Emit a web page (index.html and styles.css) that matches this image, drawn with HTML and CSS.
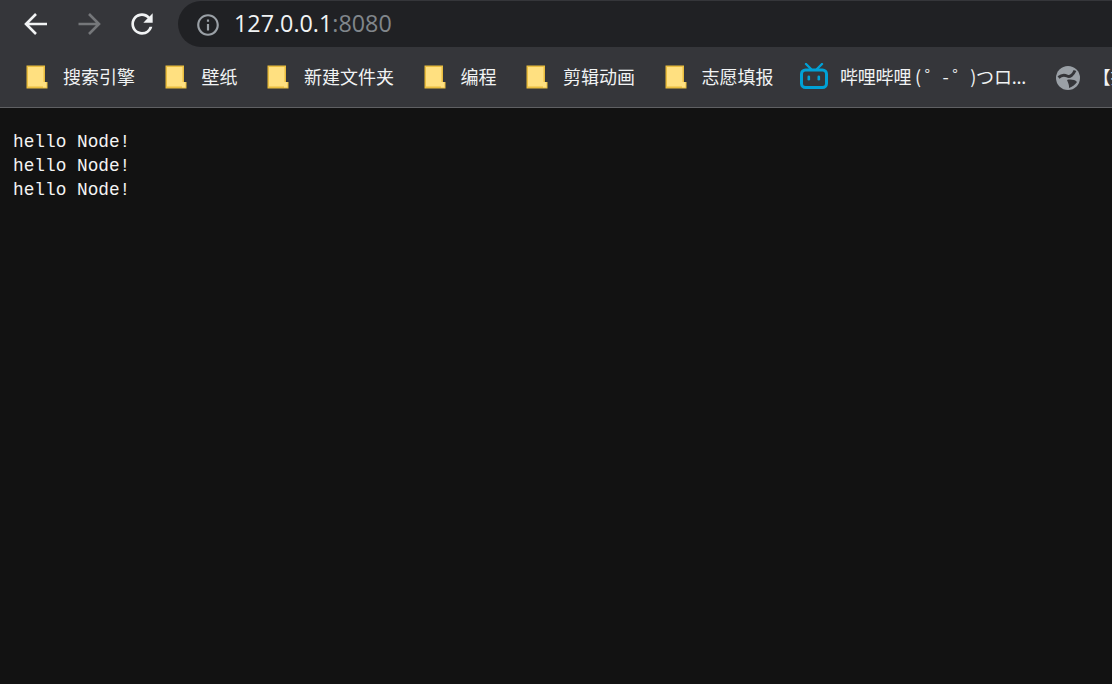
FILE: index.html
```html
<!DOCTYPE html>
<html>
<head>
  <title>127.0.0.1:8080</title>
  <meta charset="UTF-8">
  <link rel="stylesheet" href="styles.css">
</head>
<body>
  <svg class="defs" width="0" height="0">
    <symbol id="folder" viewBox="0 0 22 24">
      <path d="M0.5 0.5h18.5v16.5h2.5v6.5h-21z" fill="#e9bd3f"/>
      <rect x="2" y="2" width="15.5" height="19.5" fill="#ffe080"/>
      <rect x="17" y="17" width="3.5" height="5.5" fill="#ffe080"/>
    </symbol>
  </svg>

  <div class="toolbar">
    <button class="nav-button">
      <svg viewBox="0 0 32 32" width="32" height="32"><path d="M27 16H6.5M16 6l-10 10 10 10" fill="none" stroke="#f1f3f4" stroke-width="2.6"/></svg>
    </button>
    <button class="nav-button">
      <svg viewBox="0 0 32 32" width="32" height="32"><path d="M5.5 16H25.5M16 6l10 10-10 10" fill="none" stroke="#75777a" stroke-width="2.6"/></svg>
    </button>
    <button class="nav-button">
      <svg viewBox="0 0 24 24" width="32" height="32"><path fill="#f1f3f4" d="M17.65 6.35A7.958 7.958 0 0 0 12 4c-4.42 0-7.99 3.58-7.99 8s3.57 8 7.99 8c3.73 0 6.84-2.55 7.73-6h-2.08A5.99 5.99 0 0 1 12 18c-3.31 0-6-2.69-6-6s2.69-6 6-6c1.66 0 3.14.69 4.22 1.78L13 11h7V4l-2.35 2.35z"/></svg>
    </button>
    <div class="omnibox">
      <svg class="info-icon" viewBox="0 0 24 24" width="26" height="26"><path fill="#9aa0a6" d="M11 7h2v2h-2zm0 4h2v6h-2zm1-9C6.48 2 2 6.48 2 12s4.48 10 10 10 10-4.48 10-10S17.52 2 12 2zm0 18c-4.41 0-8-3.59-8-8s3.59-8 8-8 8 3.59 8 8-3.59 8-8 8z"/></svg>
      <span class="url"><span class="host">127.0.0.1</span><span class="port">:8080</span></span>
    </div>
  </div>

  <div class="bookmarks">
    <a class="bookmark"><svg class="folder-icon"><use href="#folder"/></svg><span class="label">搜索引擎</span></a>
    <a class="bookmark"><svg class="folder-icon"><use href="#folder"/></svg><span class="label">壁纸</span></a>
    <a class="bookmark"><svg class="folder-icon"><use href="#folder"/></svg><span class="label">新建文件夹</span></a>
    <a class="bookmark"><svg class="folder-icon"><use href="#folder"/></svg><span class="label">编程</span></a>
    <a class="bookmark"><svg class="folder-icon"><use href="#folder"/></svg><span class="label">剪辑动画</span></a>
    <a class="bookmark"><svg class="folder-icon"><use href="#folder"/></svg><span class="label">志愿填报</span></a>
    <a class="bookmark bili">
      <svg class="bili-icon" viewBox="0 0 28 26" width="28" height="26">
        <path d="M6 1l5 5M22 1l-5 5" stroke="#00a1d6" stroke-width="2.4" fill="none" stroke-linecap="round"/>
        <rect x="1.5" y="7" width="25" height="17.5" rx="4" fill="none" stroke="#00a1d6" stroke-width="3"/>
        <rect x="7.5" y="12.5" width="2.6" height="5" rx="1.3" fill="#00a1d6"/>
        <rect x="17.5" y="12.5" width="2.6" height="5" rx="1.3" fill="#00a1d6"/>
      </svg><span class="label bili-label">哔哩哔哩 ( ゜- ゜)つロ...</span></a>
    <a class="bookmark">
      <svg class="globe-icon" viewBox="0 0 24 24" width="24" height="24">
        <circle cx="12" cy="12" r="12" fill="#9aa0a6"/>
        <path d="M2.5 11.5C6 8.5 9 9 11 10c3 1.5 6-1 8-5.5" fill="none" stroke="#35363a" stroke-width="3"/>
        <path d="M11 14c3-1 8-.5 10 2-2 3-5 5-8 6 .5-3-1-5-2-8z" fill="#35363a"/>
      </svg><span class="label">【搜</span></a>
  </div>

  <pre class="output">hello Node!
hello Node!
hello Node!</pre>
</body>
</html>
```

FILE: styles.css
```css
html, body {
  height: 100%;
}

body {
  margin: 0;
  overflow: hidden;
  display: flex;
  flex-direction: column;
  background-color: #121212;
}

.defs {
  position: absolute;
}

/* Top row with arrows and address bar */
.toolbar {
  height: 48px;
  flex-shrink: 0;
  display: flex;
  align-items: flex-start;
  gap: 21px;
  padding-left: 20px;
  background-color: #35363a;
}

.nav-button {
  width: 32px;
  height: 32px;
  margin-top: 8px;
  padding: 0;
  border: none;
  background: none;
}

.nav-button svg {
  display: block;
}

.omnibox {
  flex: 1;
  height: 46px;
  margin-top: 1px;
  margin-left: -1px;
  padding-left: 17px;
  display: flex;
  align-items: center;
  border-radius: 23px 0 0 23px;
  background-color: #202124;
  font-family: "Open Sans", sans-serif;
  font-size: 23.3px;
}

.info-icon {
  margin-right: 13px;
  margin-top: 2px;
}

.url {
  margin-bottom: 3px;
}

.host {
  color: #f1f3f4;
}

.port {
  color: #80868b;
}

/* Bookmarks */
.bookmarks {
  height: 59px;
  flex-shrink: 0;
  display: flex;
  align-items: center;
  gap: 29.5px;
  padding-left: 26px;
  overflow: hidden;
  white-space: nowrap;
  background-color: #35363a;
  border-bottom: 1px solid #5f6063;
  color: #f1f3f4;
  font-family: "Noto Sans CJK SC", sans-serif;
  font-size: 18px;
}

.bookmark {
  display: flex;
  align-items: center;
  flex-shrink: 0;
}

.bili {
  margin-left: -3px;
}

.label {
  margin-bottom: 3px;
}

.bili-label {
  letter-spacing: -0.2px;
}

.folder-icon {
  width: 22px;
  height: 24px;
  margin-right: 15px;
  margin-bottom: 1px;
}

.bili-icon {
  margin-right: 12px;
  margin-bottom: 3px;
}

.globe-icon {
  margin-right: 13px;
}

/* Page content */
.output {
  margin: 0;
  padding: 22px 0 0 13px;
  color: #f4f4f4;
  font-family: "Liberation Mono", monospace;
  font-size: 17.78px;
  line-height: 24px;
}
```
